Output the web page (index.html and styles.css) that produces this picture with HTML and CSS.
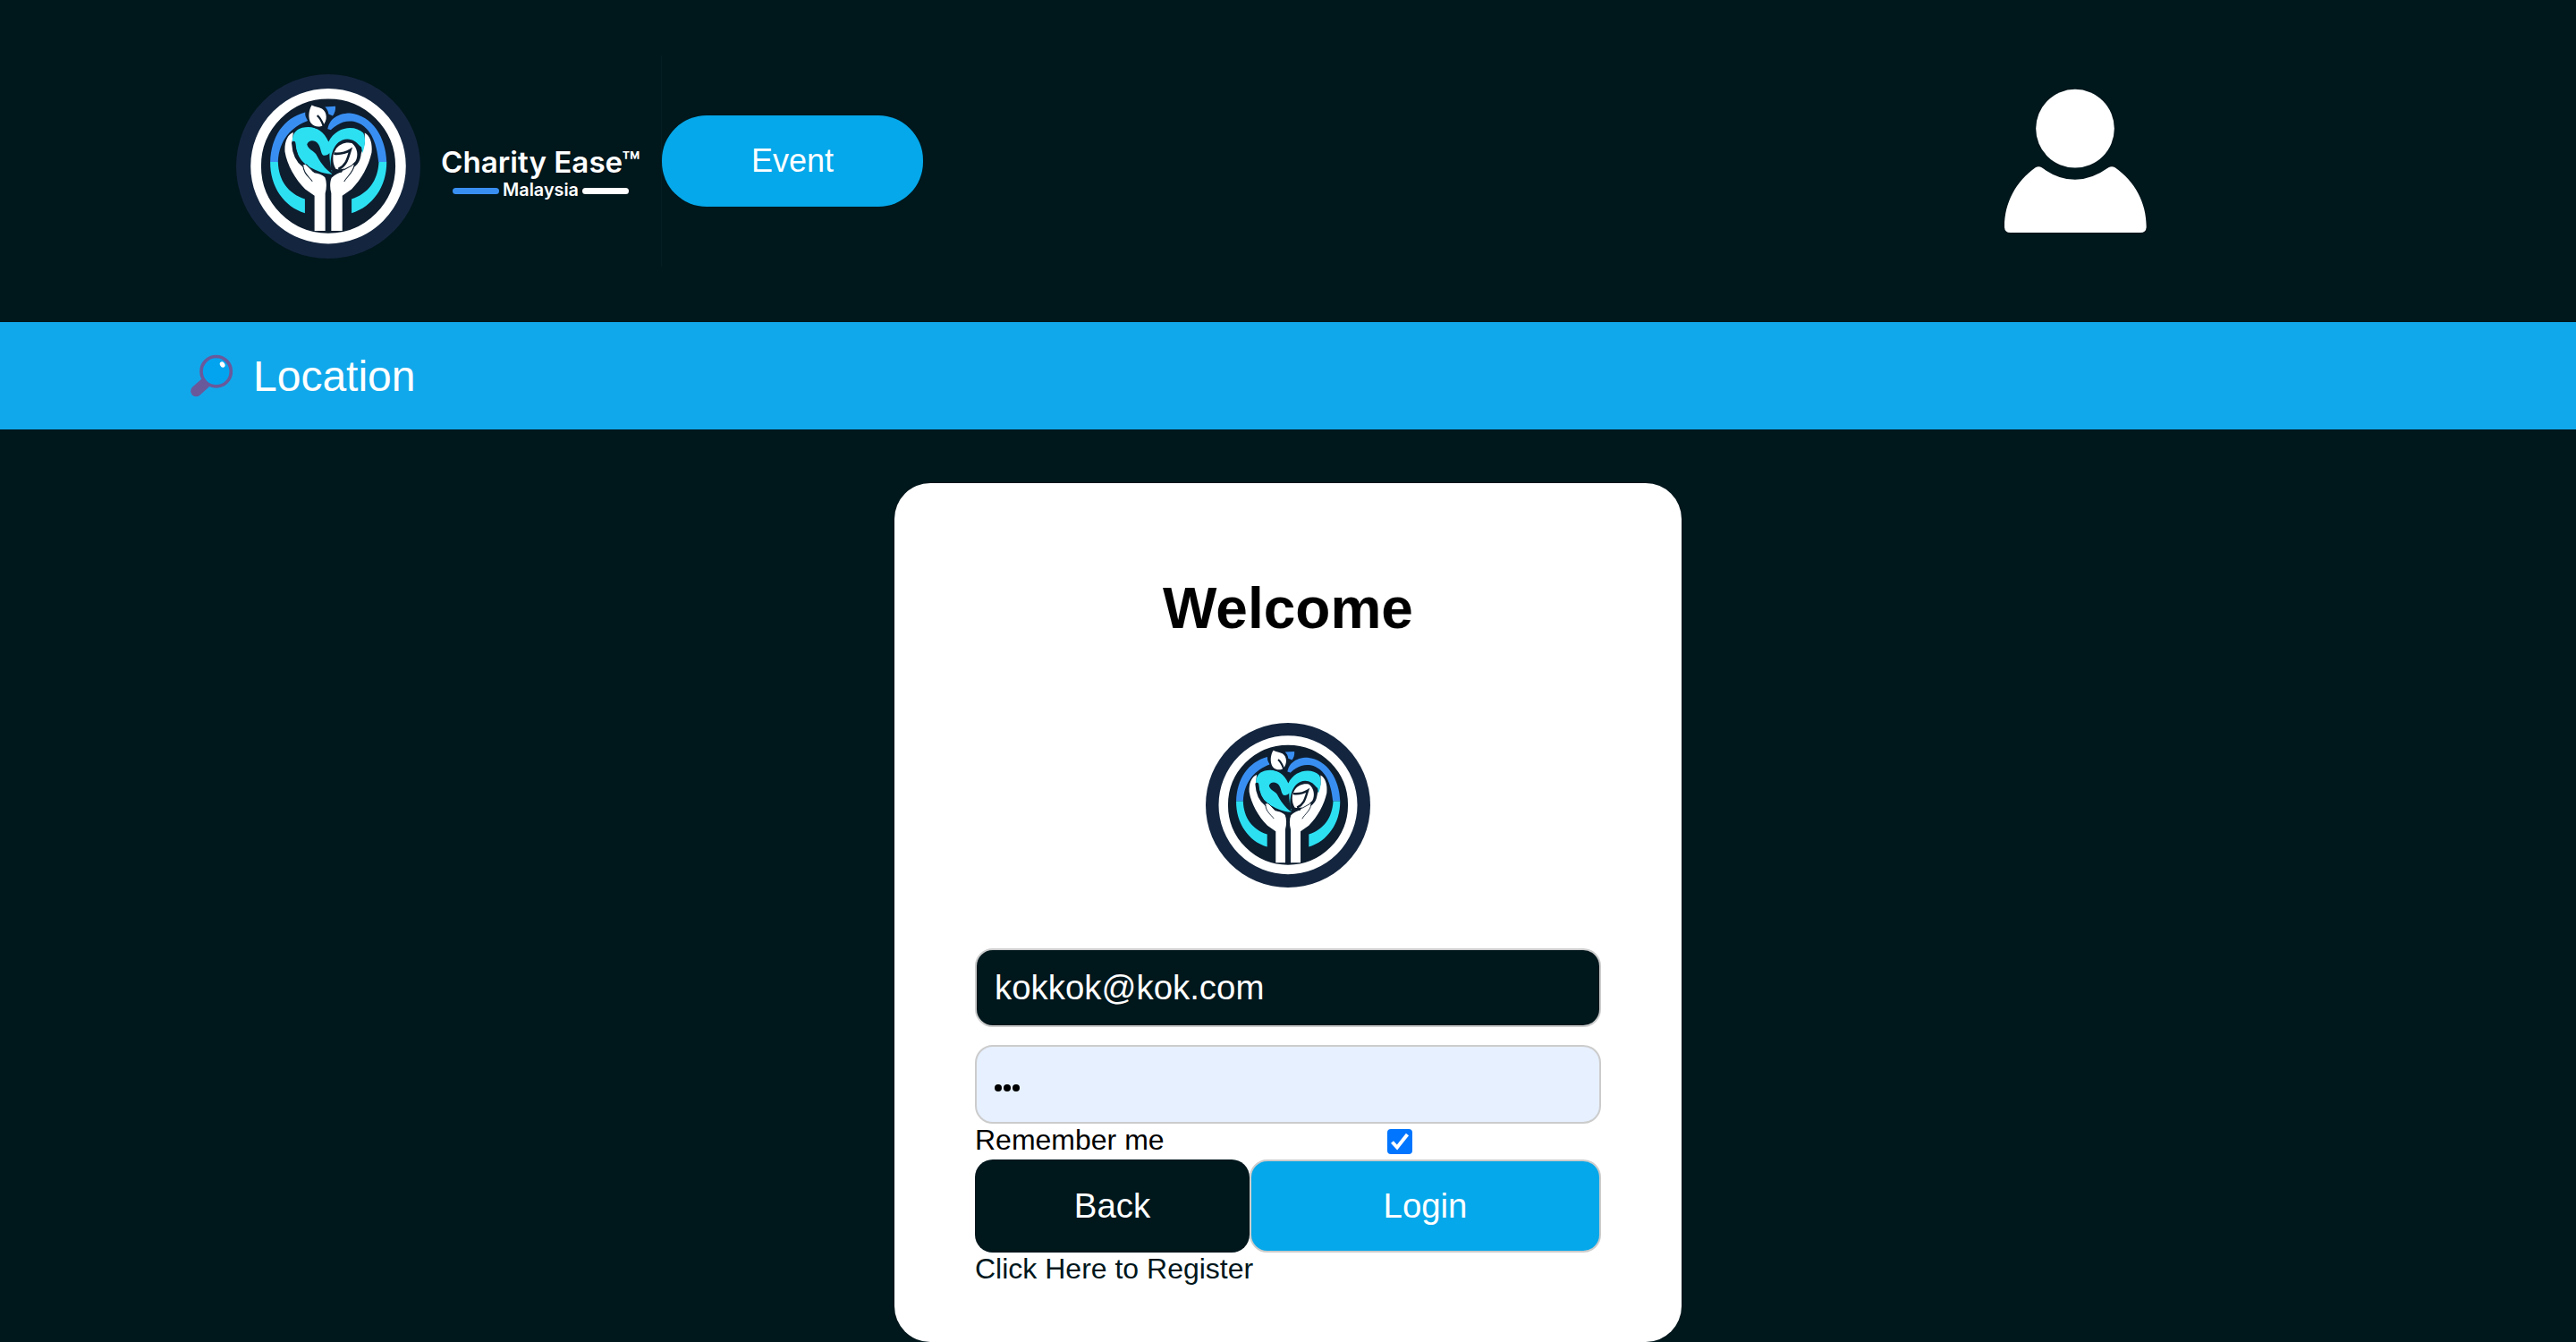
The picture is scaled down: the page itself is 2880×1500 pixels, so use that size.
FILE: index.html
```html
<!DOCTYPE html>
<html lang="en">
<head>
<meta charset="utf-8">
<title>Charity Ease</title>
<link rel="stylesheet" href="styles.css">
</head>
<body>
<svg class="defs" aria-hidden="true">
  <symbol id="emblem" viewBox="44 40 616 616">
    <circle cx="352" cy="348" r="308" fill="#14263f"/>
    <circle cx="352" cy="347" r="242" fill="#0e1e2f" stroke="#fff" stroke-width="35"/>
    <path d="M158 333C161 250 201 187 275 167C274 178 277 187 285 195C228 217 188 259 184 333Z" fill="#398ff1"/>
    <path d="M349 239C348 195 378 170 425 170C500 178 545 252 547 333H520C514 266 492 211 437 198C399 192 371 213 349 239Z" fill="#398ff1"/>
    <path d="M341 149L376 147C377 160 374 170 367 179L353 173C352 162 347 155 341 149Z" fill="#398ff1"/>
    <path d="M158 333H184C186 395 218 439 274 457V504C204 483 157 415 158 333Z" fill="#2ce0f2"/>
    <path d="M547 333H521C518 395 486 439 430 457V504C500 483 548 415 547 333Z" fill="#2ce0f2"/>
    <path d="M235 234C216 241 205 265 207 299C214 342 241 391 275 424L306 446V563H342V438C347 420 347 399 341 385C333 375 317 372 304 369L282 350C260 334 235 300 231 268Z" fill="#fff"/>
    <path d="M474 236C492 246 500 270 497 302C487 347 463 391 430 424L399 446V563H362V438C357 420 357 400 363 386C374 374 389 369 402 365L424 350C450 330 470 295 474 269Z" fill="#fff"/>
    <path d="M353 266C334 223 302 211 265 219C241 226 231 243 232 266L241 269C243 298 255 325 275 342C303 357 329 373 364 374C365 340 371 316 380 296C400 267 435 257 463 284L466 304C476 280 478 252 469 236C440 208 379 214 353 266Z" fill="#2ce0f2"/>
    <path d="M236 270C238 306 250 330 271 345" fill="none" stroke="#0e1e2f" stroke-width="13" stroke-linecap="round"/>
    <path d="M281 274C288 256 311 261 319 274C327 286 326 299 333 309C338 315 353 309 356 303C356 328 359 350 366 374C340 356 324 332 311 307C303 295 284 291 281 274Z" fill="#0e1e2f"/>
    <path d="M360 360C357 315 368 259 416 257C452 259 471 290 458 324C449 350 427 357 408 369L377 366Z" fill="#0e1e2f"/>
    <path d="M377 291C388 272 413 265 431 270C449 284 454 311 443 331C427 349 400 363 377 356C367 340 367 321 369 307Z" fill="#fff"/>
    <path d="M371 305Q402 308 426 293C417 321 413 345 386 357" fill="none" stroke="#0e1e2f" stroke-width="8"/>
    <path d="M401 362C409 347 425 339 438 343L439 356L416 386C401 379 391 371 401 362Z" fill="#fff"/>
    <path d="M267 344C278 337 290 350 303 368L295 390L273 364Z" fill="#fff"/>
    <path d="M268 346C268 370 287 383 299 398M439 344C435 370 414 382 405 399M278 341L302 365M403 360L434 343" fill="none" stroke="#0e1e2f" stroke-width="3"/>
    <path d="M297 143C286 160 284 187 294 203C304 217 324 218 334 211C350 195 349 166 331 155C318 148 308 149 297 143Z" fill="#fff" stroke="#0e1e2f" stroke-width="14" paint-order="stroke"/>
    <path d="M315 178C328 187 332 202 339 219" fill="none" stroke="#0e1e2f" stroke-width="7"/>
    <path d="M326 216C337 222 346 234 352 249L361 226Z" fill="#0e1e2f"/>
  </symbol>
</svg>

<header class="header">
  <a class="brand">
    <svg class="brand-emblem"><use href="#emblem"/></svg>
    <svg class="brand-name" viewBox="0 0 230 80">
      <text x="0" y="43" font-size="32" textLength="223" lengthAdjust="spacingAndGlyphs">Charity Ease™</text>
      <rect x="13" y="60" width="52" height="7" rx="3.5" fill="#398ff1"/>
      <text x="69" y="69" font-size="19.5" textLength="85" lengthAdjust="spacingAndGlyphs">Malaysia</text>
      <rect x="158" y="60" width="52" height="7" rx="3.5" fill="#fff"/>
    </svg>
  </a>
  <a class="event">Event</a>
  <svg class="user" viewBox="0 0 720 600">
    <circle cx="360" cy="191" r="131.500"/>
    <path d="M248 322Q360 403 472 322Q483 315 494 322C560 368 599 440 599 520Q599 540 579 540H143Q123 540 123 520C123 440 162 368 227 322Q238 315 248 322Z"/>
  </svg>
</header>

<nav class="location">
  <svg class="lens" viewBox="0 0 144 146">
    <path d="M49 98L20 124" stroke="#69599b" stroke-width="37" stroke-linecap="round" transform="translate(-1 -1)"/>
    <circle cx="86" cy="57" r="50" fill="#02a4ef" stroke="#69599b" stroke-width="11"/>
    <ellipse cx="107" cy="34" rx="8" ry="10" fill="#fff" transform="rotate(-30 107 34)"/>
  </svg>
  <span>Location</span>
</nav>

<main class="main">
  <form class="card">
    <h1>Welcome</h1>
    <svg class="card-emblem"><use href="#emblem"/></svg>
    <div class="field email">kokkok@kok.com</div>
    <div class="field password"><i></i><i></i><i></i></div>
    <div class="remember">
      <span>Remember me</span>
      <svg class="check" viewBox="0 0 28 28"><rect width="28" height="28" rx="4" fill="#0075ff"/><path d="M5.500 14.500L11 20.500L22.500 6" fill="none" stroke="#fff" stroke-width="4"/></svg>
    </div>
    <div class="actions">
      <a class="back">Back</a>
      <a class="login">Login</a>
    </div>
    <a class="register">Click Here to Register</a>
  </form>
</main>
</body>
</html>
```
FILE: styles.css
```css
* { box-sizing: border-box; }
body {
  margin: 0;
  height: 1500px;
  overflow: hidden;
  background: #00171c;
  color: #000;
  font: 32px/36px "Liberation Sans", Arial, sans-serif;
}
.defs { position: absolute; width: 0; height: 0; }

.header {
  display: flex;
  height: 360px;
  padding-left: 264px;
}
.brand {
  display: flex;
  width: 476px;
  height: 236px;
  margin-top: 62px;
  border-right: 1px solid #051e23;
}
.brand-emblem { flex: none; width: 206px; height: 206px; margin-top: 21px; }
.brand-name {
  flex: none;
  width: 230px;
  height: 80px;
  margin: 88px 0 0 23px;
  fill: #fff;
  font-family: Inter, "Noto Sans", sans-serif;
  font-weight: 600;
}
.event {
  width: 292px;
  height: 102px;
  margin-top: 129px;
  border-radius: 50px;
  background: #05a8ea;
  color: #fff;
  font-size: 36px;
  line-height: 102px;
  text-align: center;
}
.user { width: 240px; height: 200px; margin: 80px 0 0 1168px; fill: #fff; }

.location {
  display: flex;
  height: 120px;
  padding-left: 213px;
  background: #11a8eb;
  color: #fff;
  font-size: 48px;
  line-height: 121px;
}
.lens { width: 48px; height: 49px; margin: 36px 22px 0 0; }

.main { display: flex; justify-content: center; padding-top: 60px; }
.card {
  display: flex;
  flex-direction: column;
  width: 880px;
  height: 960px;
  padding: 103px 90px 0;
  border-radius: 40px;
  background: #fff;
}
h1 { margin: 0; font-size: 64px; line-height: 74px; text-align: center; }
.card-emblem { align-self: center; width: 184px; height: 184px; margin: 91px 0 68px; }
.field {
  display: flex;
  height: 88px;
  padding: 0 20px;
  border: 2px solid #ccc;
  border-radius: 20px;
  font-size: 38.4px;
  line-height: 84px;
}
.email { background: #00171c; color: #fff; }
.password { align-items: center; gap: 2px; margin-top: 20px; padding-top: 8px; background: #e6f0ff; }
.password i { width: 8px; height: 8px; border-radius: 50%; background: #000; }
.remember { display: flex; justify-content: space-between; height: 40px; }
.check { width: 28px; height: 28px; margin: 6px 211px 0 0; }
.actions { display: flex; height: 104px; color: #fff; font-size: 38.4px; text-align: center; }
.back { width: 307px; border-radius: 20px; background: #00171c; line-height: 104px; }
.login { flex: 1; border: 2px solid #ccc; border-radius: 20px; background: #05a8ea; line-height: 100px; }
.register { color: #00171c; }
```
